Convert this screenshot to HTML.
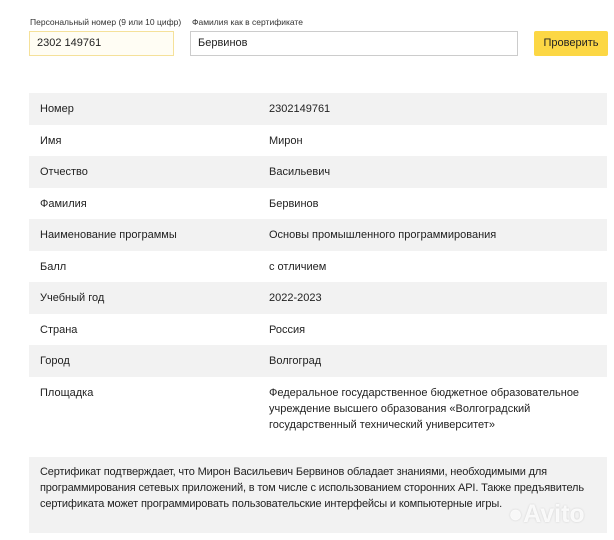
<!DOCTYPE html>
<html><head><meta charset="utf-8"><style>
body{margin:0;width:614px;height:540px;background:#fff;font-family:"Liberation Sans",sans-serif;color:#222;overflow:hidden;position:relative}
.lab{position:absolute;top:17px;font-size:8.5px;color:#333}
.inp{position:absolute;top:31px;height:25px;box-sizing:border-box;border:1px solid #ccc;font-size:11px;padding:0 7px;line-height:23px}
.btn{position:absolute;left:534px;top:31px;width:74px;height:25px;background:#fcd744;border-radius:2px;font-size:11px;text-align:center;line-height:25px}
.row{position:absolute;left:29px;width:578px;height:31.5px;font-size:11px}
.row.g{background:#f2f2f2}
.row span{position:absolute;top:10px;left:11px}
.row span+span{left:240px;line-height:16px;top:8px}
.box{position:absolute;left:29px;top:457px;width:578px;height:76px;background:#f2f2f2;font-size:11px;line-height:16px;box-sizing:border-box;padding:7px 11px;letter-spacing:-0.15px}
.avito{position:absolute;left:508px;top:500px;font-size:25px;font-weight:bold;color:rgba(255,255,255,.85);text-shadow:0 0 2px rgba(0,0,0,.15)}
</style></head><body>
<div class="lab" style="left:30px">Персональный номер (9 или 10 цифр)</div>
<div class="lab" style="left:192px">Фамилия как в сертификате</div>
<div class="inp" style="left:29px;width:145px;border-color:#f5e19a;background:#fffdf4">2302 149761</div>
<div class="inp" style="left:190px;width:328px">Бервинов</div>
<div class="btn">Проверить</div>
<div class="row g" style="top:93px"><span>Номер</span><span>2302149761</span></div>
<div class="row" style="top:124.5px"><span>Имя</span><span>Мирон</span></div>
<div class="row g" style="top:156px"><span>Отчество</span><span>Васильевич</span></div>
<div class="row" style="top:187.5px"><span>Фамилия</span><span>Бервинов</span></div>
<div class="row g" style="top:219px"><span>Наименование программы</span><span>Основы промышленного программирования</span></div>
<div class="row" style="top:250.5px"><span>Балл</span><span>с отличием</span></div>
<div class="row g" style="top:282px"><span>Учебный год</span><span>2022-2023</span></div>
<div class="row" style="top:313.5px"><span>Страна</span><span>Россия</span></div>
<div class="row g" style="top:345px"><span>Город</span><span>Волгоград</span></div>
<div class="row" style="top:377px;height:62px"><span>Площадка</span><span>Федеральное государственное бюджетное образовательное<br>учреждение высшего образования «Волгоградский<br>государственный технический университет»</span></div>
<div class="box">Сертификат подтверждает, что Мирон Васильевич Бервинов обладает знаниями, необходимыми для<br>программирования сетевых приложений, в том числе с использованием сторонних API. Также предъявитель<br>сертификата может программировать пользовательские интерфейсы и компьютерные игры.</div>
<div class="avito">●Avito</div>
</body></html>
